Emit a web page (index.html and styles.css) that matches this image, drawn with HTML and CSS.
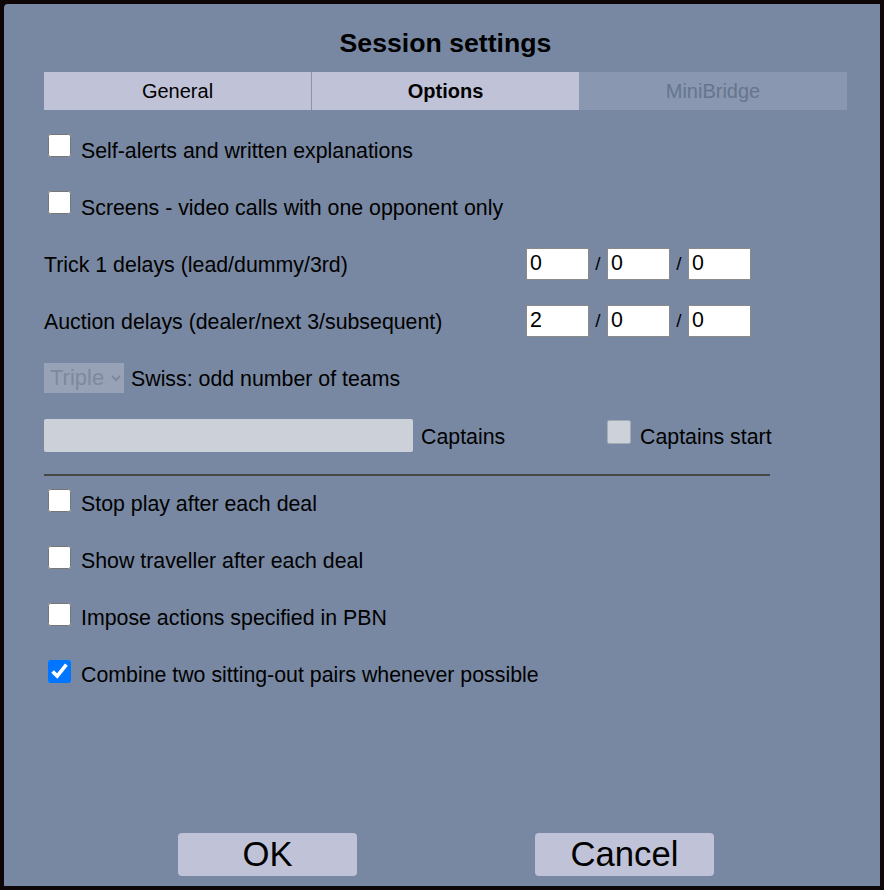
FILE: index.html
```html
<!DOCTYPE html>
<html lang="en">
<head>
  <meta charset="UTF-8">
  <title>Session settings</title>
  <link rel="stylesheet" href="styles.css">
</head>
<body>
  <div class="dialog">
    <h1 class="title">Session settings</h1>

    <div class="tabs">
      <div class="tab">General</div>
      <div class="tab active">Options</div>
      <div class="tab disabled">MiniBridge</div>
    </div>

    <div class="options">
      <label class="row upper">
        <input type="checkbox" class="check">
        <span>Self-alerts and written explanations</span>
      </label>
      <label class="row upper">
        <input type="checkbox" class="check">
        <span>Screens - video calls with one opponent only</span>
      </label>

      <div class="row delays first-delay">
        <span class="delay-label">Trick 1 delays (lead/dummy/3rd)</span>
        <input type="text" class="num" value="0">
        <span class="slash">/</span>
        <input type="text" class="num" value="0">
        <span class="slash">/</span>
        <input type="text" class="num" value="0">
      </div>
      <div class="row delays">
        <span class="delay-label">Auction delays (dealer/next 3/subsequent)</span>
        <input type="text" class="num" value="2">
        <span class="slash">/</span>
        <input type="text" class="num" value="0">
        <span class="slash">/</span>
        <input type="text" class="num" value="0">
      </div>

      <div class="row">
        <select class="swiss" disabled>
          <option>Triple</option>
        </select>
        <span class="swiss-label">Swiss: odd number of teams</span>
      </div>

      <div class="row captains-row">
        <div class="captains">
          <input type="text" class="captains-box" disabled>
          <span class="captains-label">Captains</span>
        </div>
        <label class="captains-start">
          <input type="checkbox" class="check small" disabled>
          <span>Captains start</span>
        </label>
      </div>

      <div class="divider"></div>

      <label class="row">
        <input type="checkbox" class="check">
        <span>Stop play after each deal</span>
      </label>
      <label class="row">
        <input type="checkbox" class="check">
        <span>Show traveller after each deal</span>
      </label>
      <label class="row">
        <input type="checkbox" class="check">
        <span>Impose actions specified in PBN</span>
      </label>
      <label class="row">
        <input type="checkbox" class="check" checked>
        <span>Combine two sitting-out pairs whenever possible</span>
      </label>
    </div>

    <div class="buttons">
      <button class="btn">OK</button>
      <button class="btn">Cancel</button>
    </div>
  </div>
</body>
</html>
```

FILE: styles.css
```css
html, body { margin: 0; padding: 0; }
body { background-color: #0f0707; font-family: "Liberation Sans", Arial, sans-serif; color: #000; }

.dialog {
  margin: 4px;
  height: 882px;
  box-sizing: border-box;
  padding: 24px 33px 10px 40px;
  background-color: #7888a2;
  border-radius: 4px 0 0 0;
  display: flex;
  flex-direction: column;
}

.title {
  margin: 0 0 14px 0;
  font-size: 26.67px;
  line-height: 30px;
  font-weight: bold;
  text-align: center;
}

.tabs {
  display: grid;
  grid-template-columns: 267px 268px 268px;
  height: 38px;
}
.tab {
  background-color: #c0c3d7;
  font-size: 20px;
  line-height: 38px;
  text-align: center;
}
.tab.active { font-weight: bold; border-left: 1px solid #8994ab; }
.tab.disabled { background-color: #8998b0; color: #66758e; }

.options { margin-top: 12px; font-size: 21.33px; }

.row {
  display: flex;
  align-items: center;
  height: 57px;
}

.check {
  width: 23px;
  height: 23px;
  margin: 0 10px 0 4px;
  flex: none;
  position: relative;
  top: -4px;
}
.row.upper .check { top: -5px; }
.row.upper span { padding-top: 2px; }

.first-delay { margin-top: -1px; }
.delay-label { width: 482px; padding-top: 4px; }
.num {
  width: 63px;
  height: 32px;
  box-sizing: border-box;
  border: 1px solid #8a8a8a;
  padding: 0 3px;
  font-family: inherit;
  font-size: 21.33px;
  color: #000;
  background: #fff;
}
.slash { width: 18px; text-align: center; font-size: 19px; }

.swiss {
  height: 30px;
  width: 80px;
  font-family: inherit;
  font-size: 22px;
  background-color: #a5aebf;
  color: #808a9b;
  border: none;
  border-radius: 0;
  padding: 0 0 0 2px;
  margin: 0 7px 0 0;
}
.swiss-label { padding-top: 4px; }

.captains-row { margin-top: 1px; }
.captains { width: 563px; display: flex; align-items: center; }
.captains-box {
  width: 369px;
  height: 33px;
  box-sizing: border-box;
  border: none;
  border-radius: 2px;
  background-color: #ccd1d9;
  margin: 0;
}
.captains-label { margin-left: 8px; padding-top: 4px; }
.captains-start { display: flex; align-items: center; }
.captains-start span { padding-top: 4px; }
.captains-start .check { width: 24px; height: 24px; margin: 0 9px 0 0; top: -4px; }

.divider {
  width: 726px;
  height: 2px;
  background-color: #474747;
  margin-top: 10px;
}

.buttons {
  margin-top: auto;
  display: flex;
  justify-content: center;
  gap: 178px;
  padding-left: 1px;
}
.btn {
  width: 179px;
  height: 43px;
  border: none;
  border-radius: 4px;
  background-color: #c0c3d7;
  font-family: inherit;
  font-size: 34.67px;
  line-height: 43px;
  padding: 0;
  color: #000;
}
```
